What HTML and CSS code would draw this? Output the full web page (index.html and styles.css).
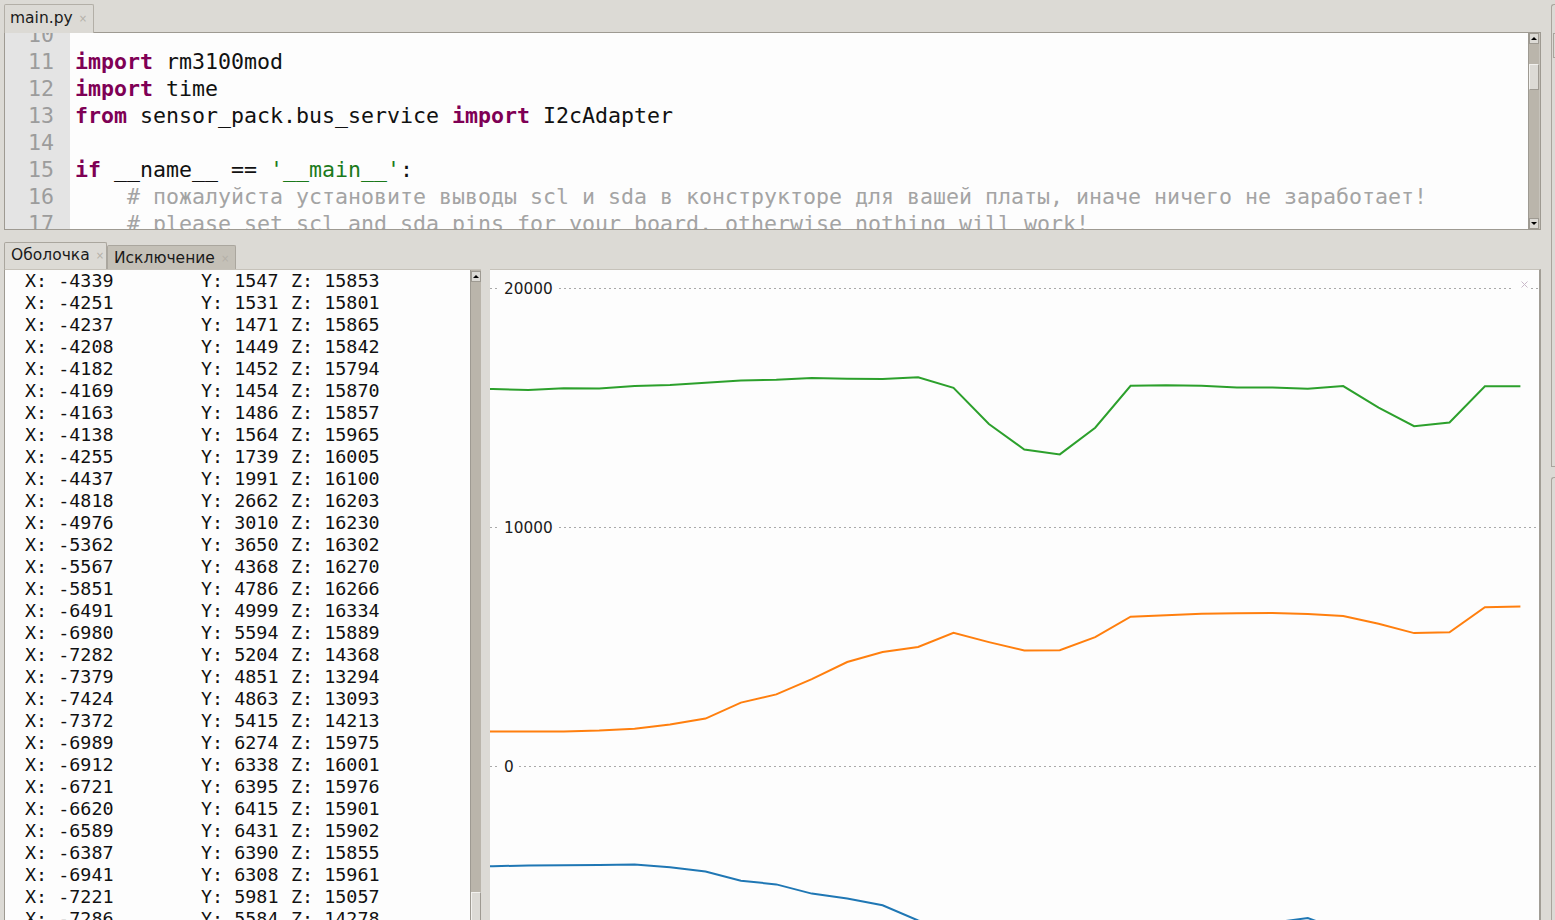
FILE: index.html
```html
<!DOCTYPE html>
<html lang="ru">
<head>
<meta charset="utf-8">
<title>Thonny</title>
<link rel="stylesheet" href="styles.css">
</head>
<body>
<div class="app">
  <div class="main">
    <div class="tabs-top">
      <div class="tab active">main.py<span class="x">×</span></div>
    </div>
    <div class="editor">
      <div class="lines">
        <div class="scroller">
          <div class="row"><span class="ln">10</span><span class="code"></span></div>
          <div class="row"><span class="ln">11</span><span class="code"><span class="kw">import</span> rm3100mod</span></div>
          <div class="row"><span class="ln">12</span><span class="code"><span class="kw">import</span> time</span></div>
          <div class="row"><span class="ln">13</span><span class="code"><span class="kw">from</span> sensor_pack.bus_service <span class="kw">import</span> I2cAdapter</span></div>
          <div class="row"><span class="ln">14</span><span class="code"></span></div>
          <div class="row"><span class="ln">15</span><span class="code"><span class="kw">if</span> __name__ == <span class="str">'__main__'</span>:</span></div>
          <div class="row"><span class="ln">16</span><span class="code">    <span class="cm"># пожалуйста установите выводы scl и sda в конструкторе для вашей платы, иначе ничего не заработает!</span></span></div>
          <div class="row"><span class="ln">17</span><span class="code">    <span class="cm"># please set scl and sda pins for your board, otherwise nothing will work!</span></span></div>
        </div>
      </div>
      <div class="vscroll ed-scroll">
        <div class="arrow up"></div>
        <div class="trough"><div class="thumb ed-thumb"></div></div>
        <div class="arrow down"></div>
      </div>
    </div>

    <div class="tabs-shell">
      <div class="stab sel">Оболочка<span class="x">×</span></div>
      <div class="stab">Исключение<span class="x">×</span></div>
    </div>

    <div class="bottom">
      <div class="shell">
        <div class="shell-text">
          <div class="r"><span>X: -4339</span><span>Y: 1547</span><span>Z: 15853</span></div>
          <div class="r"><span>X: -4251</span><span>Y: 1531</span><span>Z: 15801</span></div>
          <div class="r"><span>X: -4237</span><span>Y: 1471</span><span>Z: 15865</span></div>
          <div class="r"><span>X: -4208</span><span>Y: 1449</span><span>Z: 15842</span></div>
          <div class="r"><span>X: -4182</span><span>Y: 1452</span><span>Z: 15794</span></div>
          <div class="r"><span>X: -4169</span><span>Y: 1454</span><span>Z: 15870</span></div>
          <div class="r"><span>X: -4163</span><span>Y: 1486</span><span>Z: 15857</span></div>
          <div class="r"><span>X: -4138</span><span>Y: 1564</span><span>Z: 15965</span></div>
          <div class="r"><span>X: -4255</span><span>Y: 1739</span><span>Z: 16005</span></div>
          <div class="r"><span>X: -4437</span><span>Y: 1991</span><span>Z: 16100</span></div>
          <div class="r"><span>X: -4818</span><span>Y: 2662</span><span>Z: 16203</span></div>
          <div class="r"><span>X: -4976</span><span>Y: 3010</span><span>Z: 16230</span></div>
          <div class="r"><span>X: -5362</span><span>Y: 3650</span><span>Z: 16302</span></div>
          <div class="r"><span>X: -5567</span><span>Y: 4368</span><span>Z: 16270</span></div>
          <div class="r"><span>X: -5851</span><span>Y: 4786</span><span>Z: 16266</span></div>
          <div class="r"><span>X: -6491</span><span>Y: 4999</span><span>Z: 16334</span></div>
          <div class="r"><span>X: -6980</span><span>Y: 5594</span><span>Z: 15889</span></div>
          <div class="r"><span>X: -7282</span><span>Y: 5204</span><span>Z: 14368</span></div>
          <div class="r"><span>X: -7379</span><span>Y: 4851</span><span>Z: 13294</span></div>
          <div class="r"><span>X: -7424</span><span>Y: 4863</span><span>Z: 13093</span></div>
          <div class="r"><span>X: -7372</span><span>Y: 5415</span><span>Z: 14213</span></div>
          <div class="r"><span>X: -6989</span><span>Y: 6274</span><span>Z: 15975</span></div>
          <div class="r"><span>X: -6912</span><span>Y: 6338</span><span>Z: 16001</span></div>
          <div class="r"><span>X: -6721</span><span>Y: 6395</span><span>Z: 15976</span></div>
          <div class="r"><span>X: -6620</span><span>Y: 6415</span><span>Z: 15901</span></div>
          <div class="r"><span>X: -6589</span><span>Y: 6431</span><span>Z: 15902</span></div>
          <div class="r"><span>X: -6387</span><span>Y: 6390</span><span>Z: 15855</span></div>
          <div class="r"><span>X: -6941</span><span>Y: 6308</span><span>Z: 15961</span></div>
          <div class="r"><span>X: -7221</span><span>Y: 5981</span><span>Z: 15057</span></div>
          <div class="r"><span>X: -7286</span><span>Y: 5584</span><span>Z: 14278</span></div>
        </div>
        <div class="vscroll sh-scroll">
          <div class="arrow up"></div>
          <div class="trough"><div class="thumb sh-thumb"></div></div>
        </div>
      </div>
      <div class="sash"></div>
      <div class="plot">
        <svg class="chart" width="1050" height="651" viewBox="490 270 1050 651" xmlns="http://www.w3.org/2000/svg">
          <g stroke="#a9a9a9" stroke-width="1" stroke-dasharray="2 3" fill="none">
            <line x1="490" y1="288.5" x2="500" y2="288.5"/>
            <line x1="559" y1="288.5" x2="1513" y2="288.5"/>
            <line x1="1531" y1="288.5" x2="1540" y2="288.5"/>
            <line x1="490" y1="527.5" x2="500" y2="527.5"/>
            <line x1="559" y1="527.5" x2="1540" y2="527.5"/>
            <line x1="490" y1="766.5" x2="500" y2="766.5"/>
            <line x1="519" y1="766.5" x2="1540" y2="766.5"/>
          </g>
          <g font-family="DejaVu Sans, sans-serif" font-size="15.3" fill="#1a1a1a">
            <text x="504" y="294">20000</text>
            <text x="504" y="533">10000</text>
            <text x="504" y="772">0</text>
          </g>
          <g stroke="#c9b9c9" stroke-width="1">
            <line x1="1521.5" y1="281.5" x2="1527.5" y2="287.5"/>
            <line x1="1527.5" y1="281.5" x2="1521.5" y2="287.5"/>
          </g>
          <g fill="none" stroke-width="2" stroke-linejoin="miter">
            <polyline stroke="#2ca02c" points="386.6,388.7 422.0,389.9 457.5,388.4 492.9,389.0 528.3,390.1 563.8,388.3 599.2,388.6 634.6,386.0 670.0,385.1 705.5,382.8 740.9,380.4 776.3,379.7 811.8,378.0 847.2,378.8 882.6,378.9 918.1,377.3 953.5,387.8 988.9,424.0 1024.3,449.6 1059.8,454.4 1095.2,427.7 1130.6,385.8 1166.1,385.2 1201.5,385.8 1236.9,387.6 1272.4,387.5 1307.8,388.7 1343.2,386.1 1378.6,407.6 1414.1,426.2 1449.5,422.5 1484.9,386.2 1520.4,386.2"/>
            <polyline stroke="#ff7f0e" points="386.6,729.2 422.0,729.6 457.5,731.0 492.9,731.5 528.3,731.4 563.8,731.4 599.2,730.6 634.6,728.8 670.0,724.6 705.5,718.6 740.9,702.6 776.3,694.4 811.8,679.1 847.2,662.0 882.6,652.1 918.1,647.0 953.5,632.9 988.9,642.1 1024.3,650.5 1059.8,650.3 1095.2,637.1 1130.6,616.7 1166.1,615.2 1201.5,613.8 1236.9,613.3 1272.4,612.9 1307.8,613.9 1343.2,615.9 1378.6,623.7 1414.1,633.1 1449.5,632.2 1484.9,607.2 1520.4,606.4"/>
            <polyline stroke="#1f77b4" points="386.6,869.3 422.0,867.2 457.5,866.8 492.9,866.2 528.3,865.5 563.8,865.2 599.2,865.1 634.6,864.5 670.0,867.3 705.5,871.6 740.9,880.7 776.3,884.4 811.8,893.6 847.2,898.5 882.6,905.3 918.1,920.5 953.5,932.1 988.9,939.3 1024.3,941.6 1059.8,942.7 1095.2,941.5 1130.6,932.3 1166.1,930.5 1201.5,926.0 1236.9,923.6 1272.4,922.8 1307.8,918.0 1343.2,931.2 1378.6,937.9 1414.1,939.4 1449.5,940 1484.9,935 1520.4,935"/>
          </g>
        </svg>
      </div>
    </div>
  </div>
  <div class="side">
    <div class="side-box top-box"><div class="mini"></div></div>
    <div class="side-box low-box"></div>
  </div>
</div>
</body>
</html>
```
FILE: styles.css
```css
* { box-sizing: border-box; }

html, body {
  margin: 0;
  padding: 0;
  height: 920px;
  overflow: hidden;
  background: #dcdad5;
  font-family: "DejaVu Sans", "Noto Sans", sans-serif;
  color: #1a1a1a;
}

.app {
  display: flex;
  height: 920px;
}

.main {
  width: 1541px;
  padding: 4px 0 0 4px;
  display: flex;
  flex-direction: column;
}

/* ---------- editor tab ---------- */
.tabs-top {
  display: flex;
  height: 28px;
}

.tab {
  display: flex;
  align-items: center;
  height: 29px;
  padding: 0 6px 2px 5px;
  border: 1px solid #b3afa7;
  border-bottom: none;
  border-radius: 2px 2px 0 0;
  background: #dcdad5;
  font-size: 15.5px;
  position: relative;
  z-index: 1;
}

.x {
  font-size: 10px;
  color: #b4b0a8;
  margin-left: 6px;
  margin-top: 1px;
}

/* ---------- editor ---------- */
.editor {
  height: 198px;
  display: flex;
  border: 1px solid #9e9a92;
  background: #fdfdfd;
}

.lines {
  flex: 1;
  overflow: hidden;
  background: linear-gradient(to right, #e4e4e4 0 65px, #fdfdfd 65px);
}

.scroller {
  margin-top: -12px;
}

.row {
  display: grid;
  grid-template-columns: 65px 1fr;
  height: 27px;
  font-family: "DejaVu Sans Mono", monospace;
  font-size: 21.6px;
  line-height: 27px;
  white-space: pre;
}

.ln {
  text-align: right;
  padding-right: 16px;
  color: #9c9c9c;
}

.code {
  padding-left: 5px;
  color: #111;
}

.kw { color: #7f0055; font-weight: bold; }
.str { color: #1b7a1b; }
.cm { color: #a4a4a4; }

/* ---------- scrollbars ---------- */
.vscroll {
  display: flex;
  flex-direction: column;
  background: #bab5ab;
  border-left: 1px solid #9e9a92;
}

.ed-scroll {
  width: 12px;
  border-right: 1px solid #c7c3bb;
}

.arrow {
  height: 11px;
  background: #dcdad5;
  border: 1px solid #9e9a92;
  display: flex;
  align-items: center;
  justify-content: center;
}

.arrow::before {
  content: "";
  width: 0;
  height: 0;
  border-left: 3px solid transparent;
  border-right: 3px solid transparent;
}

.arrow.up::before { border-bottom: 3px solid #000; }
.arrow.down::before { border-top: 3px solid #000; }

.trough {
  flex: 1;
  display: flex;
  flex-direction: column;
}

.thumb {
  background: #dcdad5;
  border: 1px solid #9e9a92;
  border-top-color: #f2f1ee;
  border-left-color: #f2f1ee;
}

.ed-thumb {
  margin-top: 20px;
  height: 26px;
}

/* ---------- shell tabs ---------- */
.tabs-shell {
  display: flex;
  align-items: flex-end;
  height: 27px;
  margin-top: 12px;
}

.stab {
  display: flex;
  align-items: center;
  height: 24px;
  padding: 0 6px 0 6px;
  font-size: 15.5px;
  background: #c4c0b7;
  border: 1px solid #aaa69e;
  border-bottom: none;
  border-radius: 2px 2px 0 0;
}

.stab.sel {
  height: 27px;
  padding-bottom: 2px;
  background: #dcdad5;
  width: 103px;
}

/* ---------- bottom ---------- */
.bottom {
  flex: 1;
  display: flex;
  min-height: 0;
}

.shell {
  width: 477px;
  display: flex;
  background: #fdfdfd;
  border-left: 1px solid #9e9a92;
  border-top: 1px solid #c6c2ba;
  overflow: hidden;
}

.shell-text {
  flex: 1;
  padding-left: 20px;
  font-family: "DejaVu Sans Mono", monospace;
  font-size: 18.4px;
  line-height: 22px;
  color: #111;
}

.r {
  display: grid;
  grid-template-columns: 176px 90px auto;
  height: 22px;
  white-space: pre;
}

.sh-scroll {
  width: 11px;
  padding-top: 1px;
}

.sh-thumb {
  margin-top: auto;
  height: 30px;
  margin-bottom: -2px;
}

.sash {
  width: 9px;
}

.plot {
  flex: 1;
  background: #fdfdfd;
  border-top: 1px solid #c6c2ba;
  border-right: 2px solid #a19d95;
  overflow: hidden;
}

.chart {
  display: block;
}

/* ---------- right pane edge ---------- */
.side {
  flex: 1;
  padding: 4px 0 0 10px;
  display: flex;
  flex-direction: column;
}

.side-box {
  border-left: 1px solid #a9a59d;
  border-top: 1px solid #a9a59d;
  border-radius: 3px 0 0 0;
}

.top-box {
  height: 463px;
  border-bottom: 1px solid #a9a59d;
  padding: 28px 0 0 1px;
}

.mini {
  height: 25px;
  border-left: 1px solid #a9a59d;
  border-top: 1px solid #a9a59d;
  border-bottom: 1px solid #a9a59d;
}

.low-box {
  flex: 1;
  margin-top: 10px;
}
```
